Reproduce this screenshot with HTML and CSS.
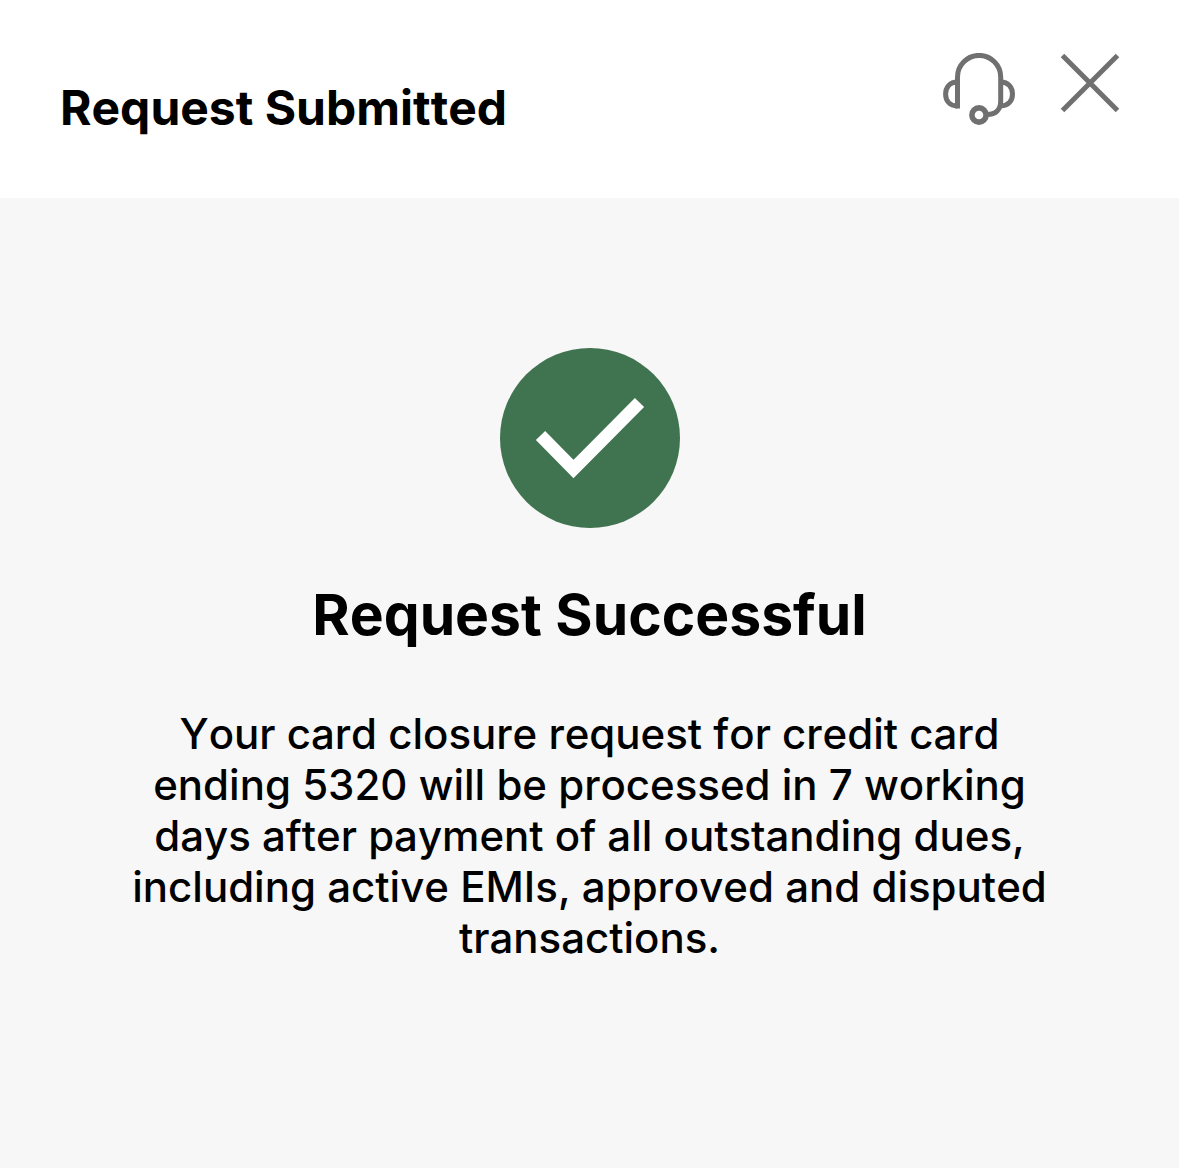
FILE: index.html
```html
<!DOCTYPE html>
<html lang="en">
<head>
<meta charset="utf-8">
<meta name="viewport" content="width=device-width, initial-scale=1">
<title>Request Submitted</title>
<link rel="stylesheet" href="styles.css">
</head>
<body>
<header class="topbar">
  <h1 class="topbar-title">Request Submitted</h1>
  <div class="actions">
    <button class="icon-button" type="button" aria-label="Support">
      <svg width="72" height="72" viewBox="0 0 72 72" fill="none" stroke="#707070" stroke-width="5">
        <path d="M14.500 55.500V24a21.600 21.600 0 0 1 43.200 0V48C57.700 56.500 53 61.500 44 61.500"/>
        <path d="M14.500 29C6.500 29 2.600 34.500 2.600 41S6.500 53 14.500 53"/>
        <path d="M57.700 29C65.500 29 69.500 34.500 69.500 41S65.500 53 57.700 53"/>
        <circle cx="36" cy="62" r="7.100" stroke-width="5.600"/>
      </svg>
    </button>
    <button class="icon-button" type="button" aria-label="Close">
      <svg width="60" height="60" viewBox="0 0 60 60" fill="none" stroke="#707070" stroke-width="5">
        <path d="M2.500 2.500L57.500 57.500M57.500 2.500L2.500 57.500"/>
      </svg>
    </button>
  </div>
</header>
<main class="result">
  <svg class="result-icon" width="180" height="180" viewBox="0 0 180 180" fill="none" aria-hidden="true">
    <circle cx="90" cy="90" r="90" fill="#40734f"/>
    <path d="M40.500 87.500L73.500 121L139.500 54.500" stroke="#fff" stroke-width="13"/>
  </svg>
  <h2 class="result-title">Request Successful</h2>
  <p class="result-text">Your card closure request for credit card ending 5320 will be processed in 7 working days after payment of all outstanding dues, including active EMIs, approved and disputed transactions.</p>
</main>
</body>
</html>
```
FILE: styles.css
```css
* {
  box-sizing: border-box;
}

body {
  display: flex;
  flex-direction: column;
  min-height: 100vh;
  margin: 0;
  background: #f7f7f7;
  color: #000;
  font-family: Inter, sans-serif;
  font-kerning: none;
  font-variant-ligatures: none;
}

.topbar {
  display: flex;
  justify-content: space-between;
  align-items: flex-start;
  padding: 53px 59px 62px 60px;
  background: #fff;
}

.topbar-title {
  margin: 27px 0 0;
  font-size: 48px;
  font-weight: 700;
  line-height: 56px;
}

.actions {
  display: flex;
  align-items: flex-start;
  gap: 45px;
}

.icon-button {
  padding: 0;
  border: 0;
  background: none;
  cursor: pointer;
}

.icon-button svg,
.result-icon {
  display: block;
}

.result {
  display: flex;
  flex: 1;
  flex-direction: column;
  align-items: center;
  padding: 150px 120px;
  text-align: center;
}

.result-title {
  margin: 52px 0 0;
  font-size: 57px;
  font-weight: 700;
  line-height: 70px;
}

.result-text {
  max-width: 940px;
  margin: 58px 0 0;
  font-size: 42px;
  font-weight: 500;
  line-height: 51px;
}
```
